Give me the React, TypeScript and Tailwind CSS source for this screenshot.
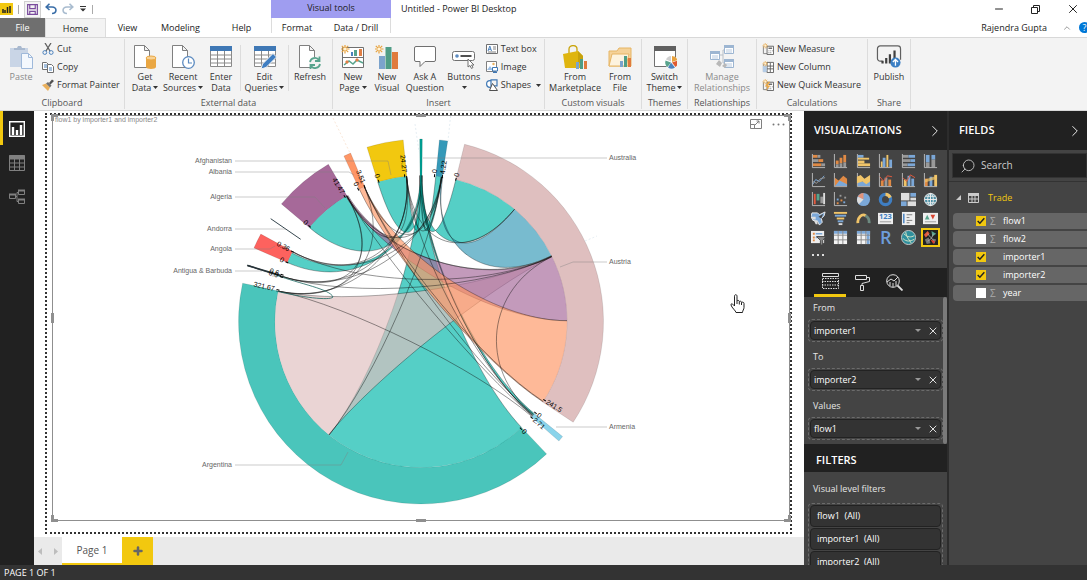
import { useState } from 'react'
import type { ReactNode } from 'react'
import { ChevronRight, ChevronUp, Minus, Plus, Search, X } from 'lucide-react'

/* ---------- ribbon icons ---------- */

const Svg = ({ box = 24, className = 'h-6 w-6', children }: { box?: number; className?: string; children: ReactNode }) => (
  <svg viewBox={`0 0 ${box} ${box}`} className={`shrink-0 ${className}`} fill="none" aria-hidden="true">
    {children}
  </svg>
)

const Sheet = () => <path d="M4.5.5h10l5 5v17h-15zM14.5.5v5h5" fill="#fff" stroke="#808080" />

const Spark = ({ x = 5, y = 5, r = 4 }: { x?: number; y?: number; r?: number }) => (
  <g transform={`translate(${x} ${y}) scale(${r / 4})`} stroke="#e8a23d" strokeWidth="1.2">
    <path d="M0-4.5v9M-4.5 0h9M-3.2-3.2l6.4 6.4M3.2-3.2l-6.4 6.4" />
    <circle r="1.6" fill="#fff3d6" stroke="none" />
  </g>
)

const PasteIcon = () => (
  <Svg>
    <path d="M1 3h18v19H1z" fill="#c9d5e6" />
    <path d="M5 5V3h3l1-2h3l1 2h3v2z" fill="#a9b9cf" />
    <path d="M12.5 8.500h7l4 4v11h-11z" fill="#f4f8fd" stroke="#9fb9da" />
    <path d="M19.500 8.500v4h4" stroke="#9fb9da" />
  </Svg>
)
const GetDataIcon = () => (
  <Svg>
    <g transform="translate(-3 0)"><Sheet /></g>
    <path d="M13 13v9c0 2.500 10 2.500 10 0v-9z" fill="#eaa743" />
    <ellipse cx="18" cy="13" rx="5" ry="2" fill="#f8d295" stroke="#eaa743" />
  </Svg>
)
const RecentIcon = () => (
  <Svg>
    <g transform="translate(-3 0)"><Sheet /></g>
    <circle cx="17.500" cy="17.500" r="5.800" fill="#fff" stroke="#5b8ac0" strokeWidth="1.300" />
    <path d="M17.500 13.500v4.500h3.500" stroke="#5b8ac0" strokeWidth="1.200" />
  </Svg>
)
const EnterIcon = () => (
  <Svg>
    <path d="M1.500 1.500h21v20h-21z" fill="#fff" stroke="#8a8a8a" />
    <path d="M1 1h22v5H1z" fill="#3f78b5" />
    <path d="M2 10h20M2 14h20M2 18h20M8.500 6v16M15.500 6v16" stroke="#8a8a8a" />
  </Svg>
)
const EditIcon = () => (
  <Svg>
    <path d="M1.500 1.500h21v20h-21z" fill="#fff" stroke="#8a8a8a" />
    <path d="M1 1h22v5H1z" fill="#3f78b5" />
    <path d="M2 10h20M2 14h20M2 18h20M8.500 6v16M15.500 6v16" stroke="#8a8a8a" />
    <path d="M8 24l1.500-5L20 8.500l3.500 3.500L13 22.500z" fill="#3f7ec2" stroke="#f3f3f3" />
  </Svg>
)
const RefreshIcon = () => (
  <Svg>
    <g transform="translate(-3 0)"><Sheet /></g>
    <circle cx="17" cy="18" r="6" fill="#f3f3f3" />
    <path d="M12 17a5 5 0 0 1 9-2M22 19a5 5 0 0 1-9 2M21.500 11.500V16H17M12.500 24.500V20H17" stroke="#58a48d" strokeWidth="1.800" />
  </Svg>
)
const NewPageIcon = () => (
  <Svg>
    <path d="M1.500 2.500h21v20h-21zM1.500 12.500h21" fill="#fff" stroke="#707070" />
    <path d="M3 20l5-4 4 3 4-4 6 3" stroke="#58a48d" strokeWidth="1.500" />
    <path d="M6 15l2 2-2 2-2-2zM16 13l2 2-2 2-2-2z" fill="#e07f45" />
    <path d="M10 7h2v4h-2z" fill="#4c82bd" />
    <path d="M13 5h3v6h-3z" fill="#58a48d" />
    <path d="M18 4h3v7h-3z" fill="#e07f45" />
    <Spark x={4} y={4} />
  </Svg>
)
const NewVisualIcon = () => (
  <Svg>
    <path d="M4 11h6v13H4z" fill="#7ba3cc" />
    <path d="M10.500 2h6v22h-6z" fill="#4f9d86" />
    <path d="M17 7h6v17h-6z" fill="#e07b3d" />
    <Spark x={4} y={4} />
  </Svg>
)
const AskIcon = () => (
  <Svg>
    <path d="M3 1.500h18a1.500 1.500 0 0 1 1.500 1.500v12a1.500 1.500 0 0 1-1.500 1.500h-9l-5 5v-5H3A1.500 1.500 0 0 1 1.500 15V3A1.500 1.500 0 0 1 3 1.500z" fill="#fff" stroke="#707070" />
  </Svg>
)
const ButtonsIcon = () => (
  <Svg>
    <rect x=".5" y="6.500" width="22" height="9" rx="2" fill="#fff" stroke="#707070" />
    <circle cx="5" cy="11" r="1.800" fill="#5b8ac0" />
    <path d="M8.500 11h11" stroke="#505050" strokeWidth="2" />
    <path d="M16 14v8l2-1.500 1.500 3 1.500-1-1.500-2.500h2.500z" fill="#fff" stroke="#707070" />
  </Svg>
)
const MarketIcon = () => (
  <Svg>
    <path d="M6 8V4c0-4.500 8-4.500 8 0v4" stroke="#c9a40a" strokeWidth="1.300" />
    <path d="M0 9l15-3 5 5v12H2z" fill="#dfb50f" />
    <path d="M15 6l5 5v7h-5z" fill="#c7a20c" />
    <path d="M13 17h3v7h-3z" fill="#7ba3cc" />
    <path d="M17 14h3v10h-3z" fill="#4f9d86" />
    <path d="M21 16h3v8h-3z" fill="#e07b3d" />
  </Svg>
)
const FileIcon = () => (
  <Svg>
    <path d="M1 21V6h8l2-3h12v18z" fill="#f5d299" stroke="#e6b565" />
    <path d="M1 21l3-12h17l-3 12z" fill="#fdf3df" stroke="#e6b565" />
    <path d="M12 16h3v6h-3z" fill="#7ba3cc" />
    <path d="M16 11h3v11h-3z" fill="#4f9d86" />
    <path d="M20 13h3v9h-3z" fill="#e07b3d" />
  </Svg>
)
const ThemeIcon = () => (
  <Svg>
    <path d="M1.500 2.500h21v19h-21z" fill="#fff" stroke="#707070" />
    <path d="M1 1h22v5H1z" fill="#606060" />
    <circle cx="18.500" cy="17.500" r="6.500" fill="#fff" />
    <path d="M19 17V11a6 6 0 0 1 5.500 4z" fill="#e8a23d" />
    <path d="M19 17.500l5.500-2a6 6 0 0 1-2 6.500z" fill="#e0592f" />
    <path d="M18 17.500l4 5a6 6 0 0 1-7 0z" fill="#4c82bd" />
    <path d="M18 17.500l-3.500 4.500a6 6 0 0 1-2-6.500z" fill="#58a48d" />
    <path d="M18 16.500l-5-2a6 6 0 0 1 5-3.500z" fill="#d0d0d0" />
  </Svg>
)
const ManageIcon = () => (
  <Svg>
    <path d="M9 10h4V5h2M13 10v8h2" stroke="#b9c0c8" />
    {[[0, 6], [14, 0], [14, 14]].map(([x, y]) => (
      <g key={`${x}${y}`} transform={`translate(${x} ${y})`}>
        <path d="M.5.500h9v8h-9z" fill="#fff" stroke="#9db6d2" />
        <path d="M0 0h10v3H0z" fill="#9db6d2" />
        <path d="M2 5h6M2 7h6" stroke="#b9cbe0" />
      </g>
    ))}
    <path d="M12 21l3-3 2 2-2 3zM9 15l3 3-2 4-4-3z" fill="#b8b8b8" />
  </Svg>
)
const PublishIcon = () => (
  <Svg box={26} className="h-6 w-[26px]">
    <path d="M6 17.500H3.500a3 3 0 0 1-3-3V4a3 3 0 0 1 3-3h19a3 3 0 0 1 3 3v12" stroke="#606060" strokeWidth="1.300" />
    <path d="M6 17v3M10 14v6M14 10v10M19 6v9" stroke="#404040" strokeWidth="2.400" />
    <circle cx="20" cy="19" r="5.500" fill="#3b7fc4" />
    <path d="M20 22.500V16M17.200 18.500L20 15.700l2.800 2.800" stroke="#fff" strokeWidth="1.400" />
  </Svg>
)

const small = 'h-3 w-3'
const CutIcon = () => (
  <Svg box={12} className={small}>
    <path d="M3 0l5 8M9 0L4 8" stroke="#606060" strokeWidth="1.300" />
    <circle cx="2.800" cy="9.500" r="1.900" stroke="#4c82bd" />
    <circle cx="9.200" cy="9.500" r="1.900" stroke="#4c82bd" />
  </Svg>
)
const CopyIcon = () => (
  <Svg box={12} className={small}>
    <path d="M.5 1.500h4l2 2v5h-6z" fill="#fff" stroke="#707070" />
    <path d="M5.500 3.500h4l2 2v6h-6z" fill="#fff" stroke="#707070" />
    <path d="M2 4h3M2 6h3M7 7h3M7 9h3" stroke="#4c82bd" />
  </Svg>
)
const PainterIcon = () => (
  <Svg box={12} className={small}>
    <path d="M0 6l4-1.500 4 4L6 12z" fill="#eab05c" />
    <path d="M4 4.500l2-1.500 3.500 3.500-1.500 2z" fill="#707070" />
    <path d="M7 4l3-3.500L12 2 8.500 5.500z" fill="#505050" />
  </Svg>
)
const TextBoxIcon = () => (
  <Svg box={12} className={small}>
    <path d="M.5 1.500h11v9H.5z" fill="#fff" stroke="#707070" />
    <path d="M2 8l1.800-5L5.500 8M2.600 6.300h2.400" stroke="#4c82bd" />
    <path d="M7 4h3M7 6h3M2 9h8" stroke="#808080" />
  </Svg>
)
const ImageIcon = () => (
  <Svg box={12} className={small}>
    <path d="M.5.500h10v10H.5z" fill="#fff" stroke="#808080" />
    <path d="M1 9l3-4 3 4z" fill="#9dc0e6" />
    <circle cx="7.500" cy="3" r="1.200" fill="#eab05c" />
    <path d="M6.500 6.500h5v3.500h-5zM9 10v2M7 11.500h4" fill="#fff" stroke="#3f78b5" />
  </Svg>
)
const ShapesIcon = () => (
  <Svg box={12} className={small}>
    <circle cx="4" cy="5" r="3.400" fill="#fff" stroke="#3f78b5" strokeWidth="1.200" />
    <path d="M5 .800h6v6H5z" fill="#f3f3f3" stroke="#3f78b5" strokeWidth="1.200" />
    <path d="M6.500 4.500l5 7h-8z" fill="#fff" stroke="#505050" />
  </Svg>
)
const MeasureIcon = ({ kind }: { kind: 'calc' | 'column' | 'quick' }) => (
  <Svg box={13} className="h-3 w-3">
    <path d="M1.500 3.500v8h9" stroke="#808080" />
    {kind === 'column' ? (
      <>
        <path d="M5.500 1.500h7v11h-7zM9 2v10M5.500 5.500h7M5.500 8.500h7" fill="#fff" stroke="#606060" />
        <path d="M1 5h4v7H1z" fill="#b4cce6" />
      </>
    ) : (
      <>
        <path d="M5.500 3.500h7v9h-7z" fill="#fff" stroke="#606060" />
        <path d="M7 5h4v1.500H7zM7 8h1v1H7zM9 8h1v1H9zM11 8h1v1h-1zM7 10h1v1H7zM9 10h1v1H9z" fill="#707070" />
      </>
    )}
    {kind === 'quick' && <path d="M7 3L3 8h3l-2 5 5-6H6l3-4z" fill="#f0a73c" />}
    <Spark x={3.5} y={3} r={2.600} />
  </Svg>
)

/* ---------- ribbon ---------- */

function BigButton({ icon, lines, caret, muted, className = '' }: { icon: ReactNode; lines: string[]; caret?: boolean; muted?: boolean; className?: string }) {
  return (
    <button className={`flex shrink-0 flex-col items-center pt-[6px] leading-[11px] ${muted ? 'text-[#8a8a8a]' : ''} ${className}`}>
      {icon}
      <span className="mt-[2px] flex flex-col items-center whitespace-nowrap">
        {lines.map((line, i) => (
          <span key={line} className="flex h-[11px] items-center">
            {line}
            {caret && i === lines.length - 1 && lines.length > 1 && <Caret />}
          </span>
        ))}
        {caret && lines.length === 1 && <span className="flex h-[11px] items-center"><Caret /></span>}
      </span>
    </button>
  )
}

const Caret = () => (
  <svg viewBox="0 0 5 3" className="ml-[2px] h-[3px] w-[5px]" aria-hidden="true"><path d="M0 0h5L2.500 3z" fill="#333" /></svg>
)

function SmallButton({ icon, label, caret }: { icon: ReactNode; label: string; caret?: boolean }) {
  return (
    <button className="flex h-[18px] items-center gap-[3px] whitespace-nowrap">
      {icon}
      {label}
      {caret && <Caret />}
    </button>
  )
}

function Group({ label, className, children }: { label: string; className: string; children: ReactNode }) {
  return (
    <section aria-label={label} className={`my-px flex shrink-0 flex-col border-r border-[#dcdcdc] ${className}`}>
      <div className="flex flex-1 justify-center">{children}</div>
      <div className="h-3 text-center leading-3 whitespace-nowrap text-[#555]">{label}</div>
    </section>
  )
}

const Divider = () => <div className="mt-[6px] h-[46px] w-px bg-[#dcdcdc]" />

function Ribbon() {
  return (
    <div className="flex h-[74px] shrink-0 overflow-hidden border-y border-[#d8d8d8] bg-[#f3f3f3] text-[#333]">
      <Group label="Clipboard" className="w-[125px]">
        <BigButton icon={<PasteIcon />} lines={['Paste']} muted className="w-[42px]" />
        <div className="flex flex-1 flex-col pt-px">
          <SmallButton icon={<CutIcon />} label="Cut" />
          <SmallButton icon={<CopyIcon />} label="Copy" />
          <SmallButton icon={<PainterIcon />} label="Format Painter" />
        </div>
      </Group>
      <Group label="External data" className="w-[208px]">
        <BigButton icon={<GetDataIcon />} lines={['Get', 'Data']} caret className="w-[38px]" />
        <BigButton icon={<RecentIcon />} lines={['Recent', 'Sources']} caret className="w-[38px]" />
        <BigButton icon={<EnterIcon />} lines={['Enter', 'Data']} className="w-[38px]" />
        <Divider />
        <BigButton icon={<EditIcon />} lines={['Edit', 'Queries']} caret className="w-[47px]" />
        <Divider />
        <BigButton icon={<RefreshIcon />} lines={['Refresh']} className="w-[42px]" />
      </Group>
      <Group label="Insert" className="w-[212px]">
        <BigButton icon={<NewPageIcon />} lines={['New', 'Page']} caret className="w-[34px]" />
        <BigButton icon={<NewVisualIcon />} lines={['New', 'Visual']} className="w-[34px]" />
        <BigButton icon={<AskIcon />} lines={['Ask A', 'Question']} className="w-[42px]" />
        <BigButton icon={<ButtonsIcon />} lines={['Buttons']} caret className="w-[36px]" />
        <div className="flex flex-col pt-px pl-1">
          <SmallButton icon={<TextBoxIcon />} label="Text box" />
          <SmallButton icon={<ImageIcon />} label="Image" />
          <SmallButton icon={<ShapesIcon />} label="Shapes" caret />
        </div>
      </Group>
      <Group label="Custom visuals" className="w-[97px]">
        <BigButton icon={<MarketIcon />} lines={['From', 'Marketplace']} className="w-[54px]" />
        <BigButton icon={<FileIcon />} lines={['From', 'File']} className="w-[36px]" />
      </Group>
      <Group label="Themes" className="w-[46px]">
        <BigButton icon={<ThemeIcon />} lines={['Switch', 'Theme']} caret className="w-11" />
      </Group>
      <Group label="Relationships" className="w-[69px]">
        <BigButton icon={<ManageIcon />} lines={['Manage', 'Relationships']} muted />
      </Group>
      <Group label="Calculations" className="w-[111px]">
        <div className="flex flex-1 flex-col pt-px pl-[5px]">
          <SmallButton icon={<MeasureIcon kind="calc" />} label="New Measure" />
          <SmallButton icon={<MeasureIcon kind="column" />} label="New Column" />
          <SmallButton icon={<MeasureIcon kind="quick" />} label="New Quick Measure" />
        </div>
      </Group>
      <Group label="Share" className="w-[43px]">
        <BigButton icon={<PublishIcon />} lines={['Publish']} />
      </Group>
    </div>
  )
}

function TitleArea() {
  return (
    <header className="flex shrink-0 bg-white text-[#222]">
      <div className="w-[271px] shrink-0">
        <div className="flex h-[18px] items-center">
          <svg viewBox="0 0 13 12" className="h-3 w-[13px]" aria-label="Power BI">
            <path d="M0 0h13v12H0z" fill="#f2c811" />
            <path d="M3 6v4M5 7v3M7.500 4v6M10 3v7" stroke="#222" strokeWidth="1.500" />
          </svg>
          <span className="ml-[5px] h-[9px] w-px bg-[#aaa]" />
          <button aria-label="Save" className="ml-[5px] flex h-[17px] w-[17px] items-center justify-center border border-[#d0d0d0] bg-[#f3f3f3]">
            <svg viewBox="0 0 12 12" className="h-[11px] w-[11px]" fill="none" stroke="#7a4b9d" strokeWidth="1.300"><path d="M.700.700h10.600v10.600H.700zM3 1v4h6V1M3 11V8h6v3" /></svg>
          </button>
          <button aria-label="Undo" className="ml-[4px]">
            <svg viewBox="0 0 12 12" className="h-3 w-3" fill="none" stroke="#3a6ea8" strokeWidth="1.600"><path d="M4.500.800L1.200 4l3.300 3M1.500 4H7c5.500 0 5 6.500 0 6.500" /></svg>
          </button>
          <button aria-label="Redo" className="ml-[5px]">
            <svg viewBox="0 0 12 12" className="h-3 w-3" fill="none" stroke="#a9bccf" strokeWidth="1.600"><path d="M7.500.800L10.800 4 7.500 7M10.500 4H5c-5.500 0-5 6.500 0 6.500" /></svg>
          </button>
          <button aria-label="Customize toolbar" className="ml-[6px]">
            <svg viewBox="0 0 6 6" className="h-[6px] w-[6px]"><path d="M0 0h6v1H0zM0 2.500h6L3 5.500z" fill="#333" /></svg>
          </button>
          <span className="ml-[6px] h-[9px] w-px bg-[#aaa]" />
        </div>
        <nav className="flex h-[19px] text-center leading-[19px]">
          <button className="w-[45px] bg-[#6f6f6f] text-white">File</button>
          <button className="-mb-px w-[61px] border-x border-t border-[#dcdcdc] bg-[#f3f3f3] leading-[17px]">Home</button>
          <button className="w-[43px]">View</button>
          <button className="w-[63px]">Modeling</button>
          <button className="flex-1">Help</button>
        </nav>
      </div>
      <div className="w-[120px] shrink-0">
        <div className="h-[18px] bg-[#9f9df0] text-center leading-4">Visual tools</div>
        <nav className="flex h-[15px] border-x border-[#dcdcdc] text-center leading-[19px]">
          <button className="flex-1 leading-[19px]">Format</button>
          <button className="w-[68px] leading-[19px]">Data / Drill</button>
        </nav>
      </div>
      <div className="min-w-0 flex-1">
        <div className="flex h-[18px] items-center">
          <h1 className="ml-[10px] flex-1 truncate">Untitled - Power BI Desktop</h1>
          <button aria-label="Minimize" className="mr-[26px]"><Minus className="h-3 w-3" /></button>
          <button aria-label="Restore" className="mr-[26px]">
            <svg viewBox="0 0 9 9" className="h-[9px] w-[9px]" fill="none" stroke="#222"><path d="M.500 2.500h6v6h-6zM2.500 2.500v-2h6v6h-2" /></svg>
          </button>
          <button aria-label="Close" className="mr-[7px]"><X className="h-[14px] w-[14px]" strokeWidth={1.7} /></button>
        </div>
        <div className="flex h-[19px] items-center justify-end">
          <span>Rajendra Gupta</span>
          <button aria-label="Collapse ribbon" className="ml-[15px]"><ChevronUp className="h-[10px] w-[10px] text-[#888]" /></button>
          <button aria-label="Help" className="-mr-[3px] ml-[7px] h-[11px] w-[11px] rounded-full bg-[#0078d7] text-center leading-[11px] text-white">?</button>
        </div>
      </div>
    </header>
  )
}

/* ---------- chord chart ---------- */

const CX = 421
const CY = 321.5
const OUTER = 182.5
const INNER = 146

// angle in degrees, clockwise from twelve o'clock
function at(angle: number, radius: number) {
  const rad = (angle * Math.PI) / 180
  return `${(CX + radius * Math.sin(rad)).toFixed(1)},${(CY - radius * Math.cos(rad)).toFixed(1)}`
}

function segment(a: number, b: number) {
  const large = b - a > 180 ? 1 : 0
  return `M${at(a, OUTER)}A${OUTER},${OUTER} 0 ${large} 1 ${at(b, OUTER)}L${at(b, INNER)}A${INNER},${INNER} 0 ${large} 0 ${at(a, INNER)}Z`
}

function curve(a: number, b: number) {
  return `C${at(a, INNER / 2)} ${at(b, INNER / 2)} ${at(b, INNER)}`
}

function ribbon(a: number, b: number, c: number, d: number) {
  const arc = `A${INNER},${INNER} 0 0 1 `
  return `M${at(a, INNER)}${arc}${at(b, INNER)}${curve(b, c)}${arc}${at(d, INNER)}${curve(d, a)}Z`
}

const segments: [number, number, string][] = [
  [13.8, 123.5, '#dfbfbf'],
  [129.1, 130.9, '#8ad4eb'],
  [136.5, 282.1, '#4ac5bb'],
  [287.7, 288.1, '#374649'],
  [293.8, 298.6, '#fd625e'],
  [310.1, 329.5, '#a66999'],
  [335, 337.3, '#fe9666'],
  [342.8, 354.4, '#f2c80f'],
  [359.6, 360.4, '#01a094'],
  [5.8, 8.4, '#3599b8'],
]

const chords: [number, number, number, number, string][] = [
  [136.5, 219, -0.3, 0.3, '#01b8aa'],
  [13.8, 39.8, -0.3, 0.3, '#01b8aa'],
  [342.8, 354.4, -0.3, 0.3, '#01b8aa'],
  [310.1, 329.1, -0.3, 0.3, '#01b8aa'],
  [293.8, 298, -0.3, 0.3, '#01b8aa'],
  [5.8, 8, -0.3, 0.3, '#01b8aa'],
  [129.1, 130, -0.4, 0.4, '#01b8aa'],
  [39.8, 63.2, 8, 8.6, '#3599b8'],
  [219.2, 282, 63.4, 63.6, '#dfbfbf'],
  [63.7, 89.7, 329.1, 329.9, '#a66999'],
  [89.7, 123.4, 335, 337.3, '#fe9666'],
]

const threads: [number, number][] = [
  [282, 130.6], [282, 354.3], [282, 337.2], [282, 329.4],
  [288, 329.4], [288, 354.3], [288, 8], [288, 63.5],
  [298.5, 63.5], [298.5, 354.3], [298.5, 8.2],
  [329.4, 130.3], [329.4, 354.3], [329.4, 8.2], [329.4, 63.4],
  [337.2, 129.6], [337.2, 8.2], [337.2, 123.2],
  [354.3, 130], [354.3, 8.2], [354.3, 39.8],
  [0.2, 130.2], [8.2, 219], [63.6, 129.6],
]

const values: [number, string][] = [
  [13.8, '0'], [122.5, '241.5'], [128.6, '0'], [131, '2.71'], [137, '0'],
  [282.5, '321.67'], [287.7, '0.0'], [288.6, '0.6'], [293.8, '0'], [298.5, '0.36'],
  [310.5, '0'], [328.6, '41.47'], [334.6, '0'], [337.3, '3.51'],
  [343.2, '0'], [353.6, '24.27'], [5.3, '0'], [8.4, '4.22'],
]

const leaders: { name: string; y: number; right?: boolean; d: string }[] = [
  { name: 'Afghanistan', y: 161, d: 'M235 161h153l3 14' },
  { name: 'Albania', y: 172, d: 'M235 172h114l5 3' },
  { name: 'Algeria', y: 197, d: 'M235 197h80l10 11' },
  { name: 'Andorra', y: 229, d: 'M235 229h51' },
  { name: 'Angola', y: 249, d: 'M235 249h35l5-3' },
  { name: 'Antigua & Barbuda', y: 271, d: 'M235 271h27' },
  { name: 'Argentina', y: 465, d: 'M235 465h106l7-13' },
  { name: 'Australia', y: 158, right: true, d: 'M607 158H423' },
  { name: 'Austria', y: 262, right: true, d: 'M607 262h-34l-13 5' },
  { name: 'Armenia', y: 427, right: true, d: 'M607 427h-51' },
]

function ChordChart() {
  return (
    <svg viewBox="53 116 736 404" className="h-full w-full" fontFamily='"Liberation Sans", Arial, sans-serif' fontSize="7" role="img" aria-label="flow1 by importer1 and importer2">
      {segments.map(([a, b, fill]) => (
        <path key={a} d={segment(a, b)} fill={fill} stroke="#000" strokeOpacity=".15" strokeWidth=".7" />
      ))}
      {chords.map(([a, b, c, d, fill]) => (
        <g key={`${a}-${fill}`}>
          <path d={ribbon(a, b, c, d)} fill={fill} fillOpacity=".67" />
          <path d={`M${at(b, INNER)}${curve(b, c)}M${at(d, INNER)}${curve(d, a)}`} fill="none" stroke="#000" strokeOpacity=".45" strokeWidth=".7" />
        </g>
      ))}
      {threads.map(([a, b]) => (
        <path key={`${a}-${b}`} d={`M${at(a, INNER)}${curve(a, b)}`} fill="none" stroke="#111" strokeOpacity=".6" strokeWidth=".75" />
      ))}
      <path d="M276 275C300 284 330 289 333 297C330 301 300 297 276 291" fill="none" stroke="#1a6660" strokeWidth=".8" />
      <path d="M247.500 265.500L281 275.500" stroke="#263238" strokeWidth="1.500" />
      <path d="M270.700 218.700L300.700 239.300" stroke="#37474f" />
      <g stroke="#dbe7ee" strokeWidth=".7" strokeDasharray="2 2">
        <path d="M333 118l17 35" stroke="#f6dcc8" />
        <path d="M415 124l4 28M451 112l-3 29" />
        <path d="M585 241l12-5" />
      </g>
      {leaders.map((l) => (
        <g key={l.name}>
          <path d={l.d} fill="none" stroke="#808080" strokeOpacity=".5" strokeWidth=".8" />
          <text x={l.right ? 609 : 232} y={l.y + 2} textAnchor={l.right ? 'start' : 'end'} fill="#666">{l.name}</text>
        </g>
      ))}
      {values.map(([angle, text]) => {
        const left = angle > 180
        return (
          <g key={angle} transform={`translate(${at(angle, INNER)}) rotate(${left ? angle + 90 : angle - 90})`}>
            <path d={left ? 'M1 0h-3' : 'M-1 0h3'} stroke="#000" />
            <text x={left ? -4 : 3} y="2" textAnchor={left ? 'end' : 'start'} fill="#000">{text}</text>
          </g>
        )
      })}
    </svg>
  )
}

const handles = [
  'left-[-2px] top-[-2px] h-[7px] w-[7px] border-l-[3px] border-t-[3px]',
  'right-[-2px] top-[-2px] h-[7px] w-[7px] border-r-[3px] border-t-[3px]',
  'left-[-2px] bottom-[-2px] h-[7px] w-[7px] border-l-[3px] border-b-[3px]',
  'right-[-2px] bottom-[-2px] h-[7px] w-[7px] border-r-[3px] border-b-[3px]',
  'left-1/2 top-[-2px] h-[3px] w-[10px] -translate-x-1/2 bg-[#8f8f8f]',
  'left-1/2 bottom-[-2px] h-[3px] w-[10px] -translate-x-1/2 bg-[#8f8f8f]',
  'left-[-2px] top-1/2 h-[10px] w-[3px] -translate-y-1/2 bg-[#8f8f8f]',
  'right-[-2px] top-1/2 h-[10px] w-[3px] -translate-y-1/2 bg-[#8f8f8f]',
]

function Canvas() {
  return (
    <main className="flex min-w-0 flex-1 flex-col bg-white">
      <div className="flex min-h-0 flex-1 pt-[2px] pr-3 pb-[3px] pl-[11px]">
        <div className="flex min-w-0 flex-1 border-2 border-dotted border-[#333] pb-[11px] pl-[5px]">
          <div className="relative min-w-0 flex-1 border border-[#8f8f8f]">
            <ChordChart />
            <h2 className="absolute top-0 left-[2px] font-['Liberation_Sans',sans-serif] text-[7px] leading-[7px] text-[#888]">flow1 by importer1 and importer2</h2>
            <div className="absolute top-[3px] right-1 flex items-center gap-[10px]">
              <button aria-label="Focus mode">
                <svg viewBox="0 0 12 10" className="h-[10px] w-3" fill="none" stroke="#808080"><path d="M.500.500h11v9H.500zM.500 5.500h4v4M5 6l4-4M6.500 2H9v2.500" /></svg>
              </button>
              <button aria-label="More options">
                <svg viewBox="0 0 13 3" className="h-[3px] w-[13px]" fill="#777"><circle cx="1.500" cy="1.500" r="1" /><circle cx="6.500" cy="1.500" r="1" /><circle cx="11.500" cy="1.500" r="1" /></svg>
              </button>
            </div>
            {handles.map((h) => <span key={h} className={`absolute border-[#8f8f8f] ${h}`} />)}
            <svg viewBox="0 0 15 20" className="absolute top-[44%] left-[92%] h-5 w-[15px]" fill="#fff" stroke="#222" strokeLinejoin="round" aria-hidden="true">
              <path d="M4.500 12V2.200c0-2 2.500-2 2.500 0V7c.5-1 2.300-.7 2.300.6.700-.8 2.200-.4 2.200.8.900-.6 2.500-.2 2.500 1.100v4c0 2-1.500 3-1.500 5H6c0-1.500-4.500-5-5-7.500-.2-1.600 1.500-1.500 2-.5zM7 7v3M9.300 8v2.500M11.500 8.500V11" />
            </svg>
          </div>
        </div>
      </div>
      <nav className="flex h-7 shrink-0 bg-[#eaeaea] text-[10px] text-[#555]">
        <div className="flex w-7 items-center justify-center gap-3">
          <button aria-label="Previous page"><svg viewBox="0 0 4 7" className="h-[7px] w-1"><path d="M4 0v7L0 3.500z" fill="#bdbdbd" /></svg></button>
          <button aria-label="Next page"><svg viewBox="0 0 4 7" className="h-[7px] w-1"><path d="M0 0v7l4-3.500z" fill="#bdbdbd" /></svg></button>
        </div>
        <button className="w-[60px] border-b-2 border-[#f2c80f] bg-white">Page 1</button>
        <button aria-label="Add page" className="flex w-[31px] items-center justify-center bg-[#f2c80f]"><Plus className="h-3 w-3 text-[#666]" strokeWidth={5} /></button>
      </nav>
    </main>
  )
}

function SideRail() {
  return (
    <nav className="flex w-[34px] shrink-0 flex-col bg-[#212121]">
      <button aria-label="Report" className="flex h-[34px] items-center border-l-[3px] border-[#f2c80f] pt-px pl-[6px]">
        <svg viewBox="0 0 16 16" className="h-4 w-4" fill="none" stroke="#fff"><path d="M.700.700h14.600v14.600H.700z" strokeWidth="1.400" /><path d="M4 14V6M8 14V9M12 14V4" strokeWidth="2.400" /></svg>
      </button>
      <button aria-label="Data" className="flex h-[34px] items-center pt-px pl-[9px]">
        <svg viewBox="0 0 16 16" className="h-4 w-4" fill="none" stroke="#808080"><path d="M.500.500h15v15H.500zM5.500 4v11M10.500 4v11M1 8h14M1 12h14" /><path d="M0 2.500h16" strokeWidth="4" /></svg>
      </button>
      <button aria-label="Model" className="flex h-[34px] items-center pt-px pl-[9px]">
        <svg viewBox="0 0 16 16" className="h-4 w-4" fill="none" stroke="#808080"><path d="M.500 5.500h6v4h-6zM9.500 1.500h6v4h-6zM9.500 10.500h6v4h-6zM6.500 7.500H8M8 7.500v-4h2M8 7.500v5h2" /><path d="M0 5.500h7M9 1.500h7M9 10.500h7" strokeWidth="2" /></svg>
      </button>
    </nav>
  )
}

/* ---------- visualizations pane ---------- */

const O = '#e08a45'
const B = '#7ba7d7'
const Y = '#f0c469'
const G = '#999'

type Rect = [number, number, number, number, string]

const tile = 'h-[15px] w-[15px]'

const Bars = ({ rects, axis = 'M1.500 0v14.500H15', children }: { rects: Rect[]; axis?: string; children?: ReactNode }) => (
  <Svg box={16} className={tile}>
    {rects.map(([x, y, w, h, fill]) => <rect key={`${x},${y},${fill}`} x={x} y={y} width={w} height={h} fill={fill} />)}
    <path d={axis} stroke="#bbb" />
    {children}
  </Svg>
)

const grid = 'M1 5.500h14M1 10.500h14M5.500 1v14M10.500 1v14'

const visuals: { name: string; icon: ReactNode }[] = [
  { name: 'Stacked bar chart', icon: <Bars rects={[[2, 1, 5, 3, O], [7, 1, 3, 3, G], [2, 5.500, 6, 3, G], [8, 5.500, 5, 3, O], [2, 10, 9, 3, O], [11, 10, 4, 3, G]]} /> },
  { name: 'Stacked column chart', icon: <Bars rects={[[3, 7, 3, 4, O], [3, 11, 3, 3, G], [7, 4, 3, 6, O], [7, 10, 3, 4, G], [11, 1, 3, 8, O], [11, 9, 3, 5, G]]} /> },
  { name: 'Clustered bar chart', icon: <Bars rects={[[2, 1, 6, 3, B], [2, 4, 12, 2, Y], [2, 7, 7, 3, Y], [2, 10, 13, 3, Y]]} /> },
  { name: 'Clustered column chart', icon: <Bars rects={[[3, 8, 2, 6, Y], [5, 4, 3, 10, B], [9, 1, 2, 13, Y], [12, 6, 3, 8, B]]} /> },
  { name: '100% stacked bar chart', icon: <Bars rects={[[2, 1, 6, 3, G], [8, 1, 7, 3, B], [2, 5.500, 8, 3, G], [10, 5.500, 5, 3, B], [2, 10, 5, 3, G], [7, 10, 8, 3, B]]} /> },
  { name: '100% stacked column chart', icon: <Bars rects={[[3, 1, 4, 8, B], [3, 9, 4, 5, G], [9, 1, 4, 5, B], [9, 6, 4, 8, G]]} /> },
  { name: 'Line chart', icon: <Bars rects={[]}><path d="M2 12l3-5 4 2 5-6" stroke={B} /><path d="M2 9l4 2 4-5 5-1" stroke={G} /></Bars> },
  { name: 'Area chart', icon: <Bars rects={[]}><path d="M2 14V5l4 3 5-5 4 3v8z" fill={O} /><path d="M2 14l5-6 8 4v2z" fill={B} /></Bars> },
  { name: 'Stacked area chart', icon: <Bars rects={[[2, 9, 13, 5, B]]}><path d="M1 4l4-2 4 4 6-4v7l-4 3-4-3-6 2z" fill={Y} /></Bars> },
  { name: 'Line and stacked column chart', icon: <Bars rects={[[3, 8, 3, 6, O], [7, 5, 3, 9, G], [11, 7, 3, 7, O]]}><path d="M2 4l4 5 4-6 5 1" stroke="#e35b3f" /></Bars> },
  { name: 'Line and clustered column chart', icon: <Bars rects={[[3, 7, 3, 7, Y], [7, 3, 3, 11, B], [11, 6, 3, 8, B]]}><path d="M2 5l4 4 4-7 5 3" stroke="#e35b3f" /></Bars> },
  { name: 'Ribbon chart', icon: <Bars rects={[[2, 6, 3, 8, O], [7, 4, 3, 10, B], [12, 2, 3, 12, Y]]}><path d="M2 7l13-4v3L2 10z" fill={Y} fillOpacity=".7" /></Bars> },
  { name: 'Waterfall chart', icon: <Bars rects={[[3, 2, 2, 11, '#e35b3f'], [6, 2, 3, 7, '#58a48d'], [10, 5, 3, 7, G], [13, 1, 2, 12, '#ddd']]} /> },
  { name: 'Scatter chart', icon: <Bars rects={[[4, 7, 2, 2, B], [7, 3, 2, 2, G], [8, 8, 2, 2, O], [11, 10, 2, 2, B], [12, 5, 2, 2, G], [4, 11, 2, 2, O]]} /> },
  { name: 'Pie chart', icon: <Svg box={16} className={tile}><circle cx="8" cy="8" r="7" fill={B} /><path d="M8 8V1a7 7 0 0 0-6 4z" fill="#e2937a" /><path d="M8 8L2 5a7 7 0 0 0 1 8z" fill="#ddd" /></Svg> },
  { name: 'Donut chart', icon: <Svg box={16} className={tile}><circle cx="8" cy="8" r="5.500" stroke="#3f7ec2" strokeWidth="3.500" /><path d="M8 2.500A5.500 5.500 0 0 1 13 6" stroke={Y} strokeWidth="3.500" /></Svg> },
  { name: 'Treemap', icon: <Bars axis="" rects={[[0, 1, 9, 8, '#ddd'], [10, 1, 6, 4, B], [10, 6, 6, 3, '#ddd'], [0, 10, 6, 5, B], [7, 10, 9, 5, '#ddd']]} /> },
  { name: 'Map', icon: <Svg box={16} className={tile}><circle cx="8" cy="8" r="6.500" fill="#4d8fa3" stroke="#eee" /><path d="M1.500 8h13M3 4.500h10M3 11.500h10M8 1.500v13" stroke="#eee" /><ellipse cx="8" cy="8" rx="3" ry="6.500" stroke="#eee" /></Svg> },
  { name: 'Filled map', icon: <Svg box={16} className={tile}><path d="M1 2h6l2 2 6-3-1 4-3 3 1 4-3 3-2-4-5-1-2-4z" fill={B} stroke="#eee" /><path d="M0 6h5v3H2zM3 10h4v4H5z" fill="#ddd" /><path d="M8 6l5-3-2 5z" fill="#444" /></Svg> },
  { name: 'Funnel', icon: <Bars axis="" rects={[[1, 1, 14, 2, Y], [2, 4, 12, 2, B], [4, 7, 8, 2, Y], [5, 10, 6, 2, B], [6, 13, 4, 2, '#ddd']]} /> },
  { name: 'Gauge', icon: <Svg box={16} className={tile}><path d="M2 13a6 7.500 0 0 1 8.500-8" stroke={Y} strokeWidth="3" /><path d="M10 5a6 7.500 0 0 1 4 8" stroke="#6d8a80" strokeWidth="3" /></Svg> },
  { name: 'Card', icon: <Svg box={16} className={tile}><path d="M0 2h16v12H0z" fill="#eee" /><text x="1" y="9" fontSize="8" fontWeight="700" fill="#3f7ec2">123</text><path d="M2 11.500h12" stroke={G} /></Svg> },
  { name: 'Multi-row card', icon: <Svg box={16} className={tile}><path d="M1 1h14v14H1z" fill="#eee" /><path d="M3 3v10" stroke="#3f7ec2" strokeWidth="1.500" /><path d="M6 4h6M6 7h3M6 10h6M6 12.500h3" stroke="#777" /></Svg> },
  { name: 'KPI', icon: <Svg box={16} className={tile}><path d="M0 2h16v12H0z" fill="#eee" /><path d="M2 9l2.500-5L7 9z" fill="#58a48d" /><path d="M8 4h5l-2.500 5z" fill="#d9432f" /><path d="M2 11.500h12" stroke={G} /></Svg> },
  { name: 'Slicer', icon: <Svg box={16} className={tile}><path d="M0 1h14v13H0z" fill="#eee" /><path d="M2 4h2M2 8h2M2 11h2" stroke={O} strokeWidth="2" /><path d="M5 4h7M5 8h2" stroke={B} strokeWidth="1.500" /><path d="M6 7h10l-3.500 4v5h-2.500v-5z" fill="#888" stroke="#444" /></Svg> },
  { name: 'Table', icon: <Svg box={16} className={tile}><path d="M1 1h14v14H1z" fill="#f4f4f4" /><path d="M1 2.500h14" stroke={B} strokeWidth="3" /><path d={grid} stroke="#888" /></Svg> },
  { name: 'Matrix', icon: <Svg box={16} className={tile}><path d="M1 1h14v14H1z" fill="#f4f4f4" /><path d="M1 2.500h14M13 1v14" stroke={B} strokeWidth="3" /><path d={grid} stroke="#888" /></Svg> },
  { name: 'R script visual', icon: <span className="flex h-[15px] items-center text-[18px] font-semibold text-[#6d9edb]">R</span> },
  { name: 'ArcGIS map', icon: <Svg box={16} className={tile}><circle cx="8" cy="8" r="7.500" fill="#2f8f9d" stroke="#ccc" /><path d="M3 4c4 4 8 4 11 2M2 9c4 4 8 3 12 1M5 2c0 5 5 10 6 12" stroke="#d9e6c8" /></Svg> },
]

function VisualPicker() {
  return (
    <div className="grid grid-cols-6 justify-items-center gap-y-1 pt-1 pr-[5px] pb-[7px] pl-[3px]">
      {visuals.map((v) => (
        <button key={v.name} aria-label={v.name} className="flex h-[15px] w-4 items-center justify-center">{v.icon}</button>
      ))}
      <button aria-label="Chord" className="flex h-[15px] w-[15px] items-center justify-center bg-[#222] outline-2 outline-[#f2c80f]">
        <Svg box={16} className={tile}>
          <path d="M1 5l4-4 2 3-4 4z" fill="#e35b3f" />
          <path d="M9 1l5 3-4 3z" fill="#58a48d" />
          <path d="M2 10l4-2 2 6-4 1zM10 9l4 1-2 5z" fill="#777" />
          <path d="M5 4c2 3 5 5 7 9M11 4c-1 3-2 6-6 8" stroke="#aaa" />
          <path d="M8 10l3 5 2-3z" fill="#d9432f" />
        </Svg>
      </button>
      <button aria-label="More visuals" className="flex h-3 items-center">
        <svg viewBox="0 0 13 3" className="h-[3px] w-[13px]" fill="#ddd"><path d="M0 0h2v2H0zM5 0h2v2H5zM10 0h2v2h-2z" /></svg>
      </button>
    </div>
  )
}

function Well({ label, field }: { label: string; field: string }) {
  return (
    <div className="mb-[9px] last:mb-1">
      <h3 className="mb-[5px] ml-[5px] leading-3 text-[#e6e6e6]">{label}</h3>
      <div className="rounded border border-dashed border-[#6b6b6b] p-px">
        <div className="flex h-[19px] items-center rounded-sm border border-[#222] bg-[#333] pr-px pl-[3px] text-white">
          <span className="flex-1">{field}</span>
          <button aria-label={`${field} options`} className="mr-[6px]"><svg viewBox="0 0 6 3" className="h-[3px] w-[6px]"><path d="M0 0h6L3 3z" fill="#999" /></svg></button>
          <button aria-label={`Remove ${field}`}><X className="h-3 w-3" strokeWidth={1.7} /></button>
        </div>
      </div>
    </div>
  )
}

const PaneHeader = ({ title }: { title: string }) => (
  <div className="flex h-[39px] shrink-0 items-center justify-between bg-[#212121] pr-[3px] pl-[10px] text-white">
    <h2 className="text-[11px] font-semibold">{title}</h2>
    <button aria-label={`Collapse ${title}`}><ChevronRight className="h-[18px] w-[18px]" strokeWidth={1.2} /></button>
  </div>
)

function Visualizations() {
  return (
    <aside className="flex w-[145px] shrink-0 flex-col overflow-hidden border-r-2 border-[#2c2c2c] bg-[#444]">
      <PaneHeader title="VISUALIZATIONS" />
      <VisualPicker />
      <div className="flex h-[29px] shrink-0 bg-[#212121] pl-[10px]">
        <button aria-label="Fields" className="flex w-8 items-center justify-center border-b-[3px] border-[#f2c80f]">
          <svg viewBox="0 0 17 16" className="h-4 w-[17px]" fill="none" stroke="#ddd"><path d="M.500.500h16v3H.500z" /><path d="M.500 5.500h16v10H.500zM0 8.500h17M0 12h17" strokeDasharray="1.500 1" /></svg>
        </button>
        <button aria-label="Format" className="flex w-8 items-center justify-center">
          <svg viewBox="0 0 15 17" className="h-[17px] w-[15px]" fill="none" stroke="#ddd"><path d="M.500 1.500h11v4H.500zM11.500 3.500h3v4l-7.500 2v2M5.500 11.500h3v5h-3z" /></svg>
        </button>
        <button aria-label="Analytics" className="flex w-8 items-center justify-center">
          <svg viewBox="0 0 17 17" className="h-[17px] w-[17px]" fill="none" stroke="#ddd"><circle cx="7" cy="7" r="6.300" /><path d="M11.500 11.500l5 5" strokeWidth="1.800" /><path d="M1 8l4-3 3 2 4-4M4 12V8M7 13V9M10 12V7" /></svg>
        </button>
      </div>
      <div className="flex shrink-0">
        <div className="min-w-0 flex-1 pt-[5px] pb-0 pl-1">
          <Well label="From" field="importer1" />
          <Well label="To" field="importer2" />
          <Well label="Values" field="flow1" />
        </div>
        <div className="w-1 rounded bg-[#7a7a7a]" />
      </div>
      <h2 className="h-7 shrink-0 bg-[#212121] pl-3 text-[11px] leading-8 font-semibold text-white">FILTERS</h2>
      <div className="min-h-0 flex-1 overflow-hidden pt-[11px] pr-1 pl-1 text-[#e6e6e6]">
        <h3 className="mb-2 ml-[5px] leading-3">Visual level filters</h3>
        <div className="flex flex-col gap-px rounded border border-dashed border-[#6b6b6b] p-px">
          {['flow1', 'importer1', 'importer2'].map((f) => (
            <button key={f} className="h-[22px] rounded-sm border border-[#222] bg-[#333] pl-[6px] text-left leading-5 whitespace-pre text-white">{`${f}  (All)`}</button>
          ))}
        </div>
      </div>
    </aside>
  )
}

/* ---------- fields pane ---------- */

const fieldNames = [
  { name: 'flow1', numeric: true },
  { name: 'flow2', numeric: true },
  { name: 'importer1', numeric: false },
  { name: 'importer2', numeric: false },
  { name: 'year', numeric: true },
]

function Fields() {
  const [selected, setSelected] = useState(['flow1', 'importer1', 'importer2'])

  const toggle = (name: string) =>
    setSelected((s) => (s.includes(name) ? s.filter((n) => n !== name) : [...s, name]))

  return (
    <aside className="flex w-[138px] shrink-0 flex-col overflow-hidden bg-[#444] text-white">
      <PaneHeader title="FIELDS" />
      <label className="mt-[3px] ml-[3px] flex h-[25px] shrink-0 items-center border border-[#333] bg-[#212121] pl-[7px]">
        <Search className="h-4 w-4 shrink-0 -scale-x-100 text-[#ccc]" strokeWidth={1.3} />
        <input type="search" aria-label="Search fields" placeholder="Search" className="ml-[5px] w-full min-w-0 bg-transparent text-[10px] outline-none placeholder:text-[#ccc]" />
      </label>
      <div className="mt-[3px] border-t border-[#333]" />
      <button className="flex h-[31px] items-center pl-[7px] text-[#f2c80f]">
        <svg viewBox="0 0 5 5" className="h-[5px] w-[5px]"><path d="M5 0v5H0z" fill="#ccc" /></svg>
        <svg viewBox="0 0 11 10" className="mr-[9px] ml-[7px] h-[10px] w-[11px]" fill="none" stroke="#ccc"><path d="M.500.500h10v9H.500zM4 3v6M7 3v6M1 6h9" /><path d="M0 1.500h11" strokeWidth="3" /></svg>
        Trade
      </button>
      <ul className="ml-1 flex flex-col gap-[2px]">
        {fieldNames.map((f) => (
          <li key={f.name}>
            <label className="flex h-4 items-center rounded-l-sm bg-[#666] pl-[23px]">
              <span className="relative flex h-[10px] w-[10px]">
                <input
                  type="checkbox"
                  checked={selected.includes(f.name)}
                  onChange={() => toggle(f.name)}
                  className="h-[10px] w-[10px] appearance-none bg-white checked:bg-[#f2c80f]"
                />
                {selected.includes(f.name) && (
                  <svg viewBox="0 0 9 9" className="pointer-events-none absolute inset-0 h-[10px] w-[10px]" fill="none" stroke="#222" strokeWidth="1.300"><path d="M1.500 4.500l2 2 4-4.500" /></svg>
                )}
              </span>
              <span className="w-[17px] pl-1 text-[10px] text-[#aaa]">{f.numeric ? 'Σ' : ''}</span>
              {f.name}
            </label>
          </li>
        ))}
      </ul>
    </aside>
  )
}

export default function App() {
  return (
    <div className="flex h-screen flex-col overflow-hidden bg-white font-['Open_Sans','Noto_Sans',sans-serif] text-[9px]">
      <TitleArea />
      <Ribbon />
      <div className="flex min-h-0 flex-1">
        <SideRail />
        <Canvas />
        <Visualizations />
        <Fields />
      </div>
      <footer className="h-[15px] shrink-0 bg-[#333] pl-1 leading-[15px] text-white">PAGE 1 OF 1</footer>
    </div>
  )
}
